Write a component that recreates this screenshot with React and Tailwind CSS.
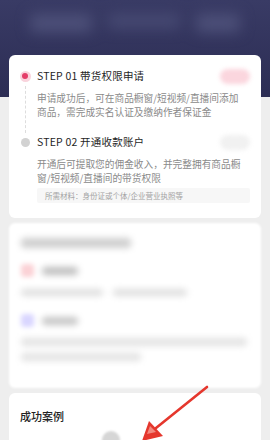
import React from "react";

const font = { fontFamily: '"Noto Sans CJK SC", "Noto Sans", sans-serif' };

function StepDot({ active }) {
  return active ? (
    <div className="w-[11px] h-[11px] rounded-full bg-[#f9d3dc] flex items-center justify-center">
      <div className="w-[6px] h-[6px] rounded-full bg-[#e43d68]" />
    </div>
  ) : (
    <div className="w-[9px] h-[9px] rounded-full bg-[#d2d2d2]" />
  );
}

function App() {
  return (
    <div
      className="relative w-[270px] h-[440px] overflow-hidden bg-[#eeeeee]"
      style={font}
    >
      {/* Navy header */}
      <div className="h-[97px] bg-gradient-to-b from-[#393b65] to-[#2c2d54] overflow-hidden">
        <div className="flex gap-[16px] px-[30px] pt-[14px] blur-[7px]">
          <div className="w-[70px] h-[18px] rounded bg-[#4d5079]" />
          <div className="w-[80px] h-[14px] rounded bg-[#474a73]" />
          <div className="w-[50px] h-[18px] rounded bg-[#4d5079]" />
        </div>
      </div>

      <div className="-mt-[42px] px-[9px] flex flex-col gap-[5px]">
        {/* Steps card */}
        <div className="bg-white rounded-[6px] pt-[14px] pb-[15px] pl-[12px] pr-[11px]">
          {/* Step 01 */}
          <div className="flex">
            <div className="w-[8px] flex flex-col items-center">
              <div className="h-[14px] flex items-center">
                <StepDot active />
              </div>
              <div className="flex-1 border-l border-dashed border-[#dddddd] mt-[3px] -mb-[14px]" />
            </div>
            <div className="flex-1 ml-[8px]">
              <div className="flex items-center justify-between h-[14px]">
                <span className="text-[10.5px] text-[#1f1f1f] tracking-[0.2px]">
                  STEP 01 带货权限申请
                </span>
                <div className="w-[30px] h-[15px] rounded-full bg-[#fbd6de] blur-[2px]" />
              </div>
              <div className="mt-[8px] text-[9.7px] leading-[14px] text-[#8a8a8a] whitespace-nowrap">
                申请成功后，可在商品橱窗/短视频/直播间添加
                <br />
                商品，需完成实名认证及缴纳作者保证金
              </div>
            </div>
          </div>

          {/* Step 02 */}
          <div className="flex mt-[16px]">
            <div className="w-[8px] flex flex-col items-center">
              <div className="h-[14px] flex items-center">
                <StepDot />
              </div>
            </div>
            <div className="flex-1 ml-[8px]">
              <div className="flex items-center justify-between h-[14px]">
                <span className="text-[10.5px] text-[#1f1f1f] tracking-[0.2px]">
                  STEP 02 开通收款账户
                </span>
                <div className="w-[30px] h-[15px] rounded-full bg-[#f1f1f1] blur-[2px]" />
              </div>
              <div className="mt-[8px] text-[9.7px] leading-[14px] text-[#8a8a8a] whitespace-nowrap">
                开通后可提取您的佣金收入，并完整拥有商品橱
                <br />
                窗/短视频/直播间的带货权限
              </div>
              <div className="mt-[3px] bg-[#f7f7f7] rounded-[2px] h-[15px] flex items-center pl-[8px] text-[7.5px] text-[#a3a3a3]">
                所需材料：身份证或个体/企业营业执照等
              </div>
            </div>
          </div>
        </div>

        {/* Blurred card */}
        <div className="bg-white rounded-[6px] h-[165px] px-[12px] pt-[15px] flex flex-col blur-[1px]">
          <div className="w-[110px] h-[10px] rounded bg-[#cfcfcf] blur-[3px]" />
          <div className="mt-[16px] flex items-center gap-[8px]">
            <div className="w-[13px] h-[13px] rounded-[3px] bg-[#fbd2d6] blur-[2px]" />
            <div className="w-[36px] h-[8px] rounded bg-[#bdbdbd] blur-[3px]" />
          </div>
          <div className="mt-[12px] flex gap-[10px]">
            <div className="w-[82px] h-[7px] rounded bg-[#dedede] blur-[3px]" />
            <div className="w-[74px] h-[7px] rounded bg-[#dedede] blur-[3px]" />
          </div>
          <div className="mt-[18px] flex items-center gap-[8px]">
            <div className="w-[13px] h-[13px] rounded-[3px] bg-[#d9d6ff] blur-[2px]" />
            <div className="w-[36px] h-[8px] rounded bg-[#c4c4c4] blur-[3px]" />
          </div>
          <div className="mt-[11px] flex flex-col gap-[7px]">
            <div className="w-[226px] h-[8px] rounded bg-[#e2e2e2] blur-[3px]" />
            <div className="w-[120px] h-[8px] rounded bg-[#e2e2e2] blur-[3px]" />
          </div>
        </div>

        {/* Success cases */}
        <div className="bg-white rounded-[6px] h-[80px] px-[11px] pt-[16px]">
          <div className="text-[11px] leading-[14px] font-medium text-[#222222]">
            成功案例
          </div>
          <div className="mt-[8px] flex pl-[82px]">
            <div className="w-[18px] h-[18px] rounded-full bg-[#d6d6d6] blur-[1px]" />
          </div>
        </div>
      </div>

      {/* Red arrow annotation */}
      <svg
        className="absolute left-0 top-0 pointer-events-none"
        width="270"
        height="440"
        viewBox="0 0 270 440"
      >
        <line
          x1="207"
          y1="387"
          x2="156"
          y2="428"
          stroke="#e5372d"
          strokeWidth="2.6"
          strokeLinecap="round"
        />
        <polygon points="142,441 149,421 163,436" fill="#e5372d" />
        <polygon points="147,434 150,426 156,432" fill="#f28a80" />
      </svg>
    </div>
  );
}

export default App;
